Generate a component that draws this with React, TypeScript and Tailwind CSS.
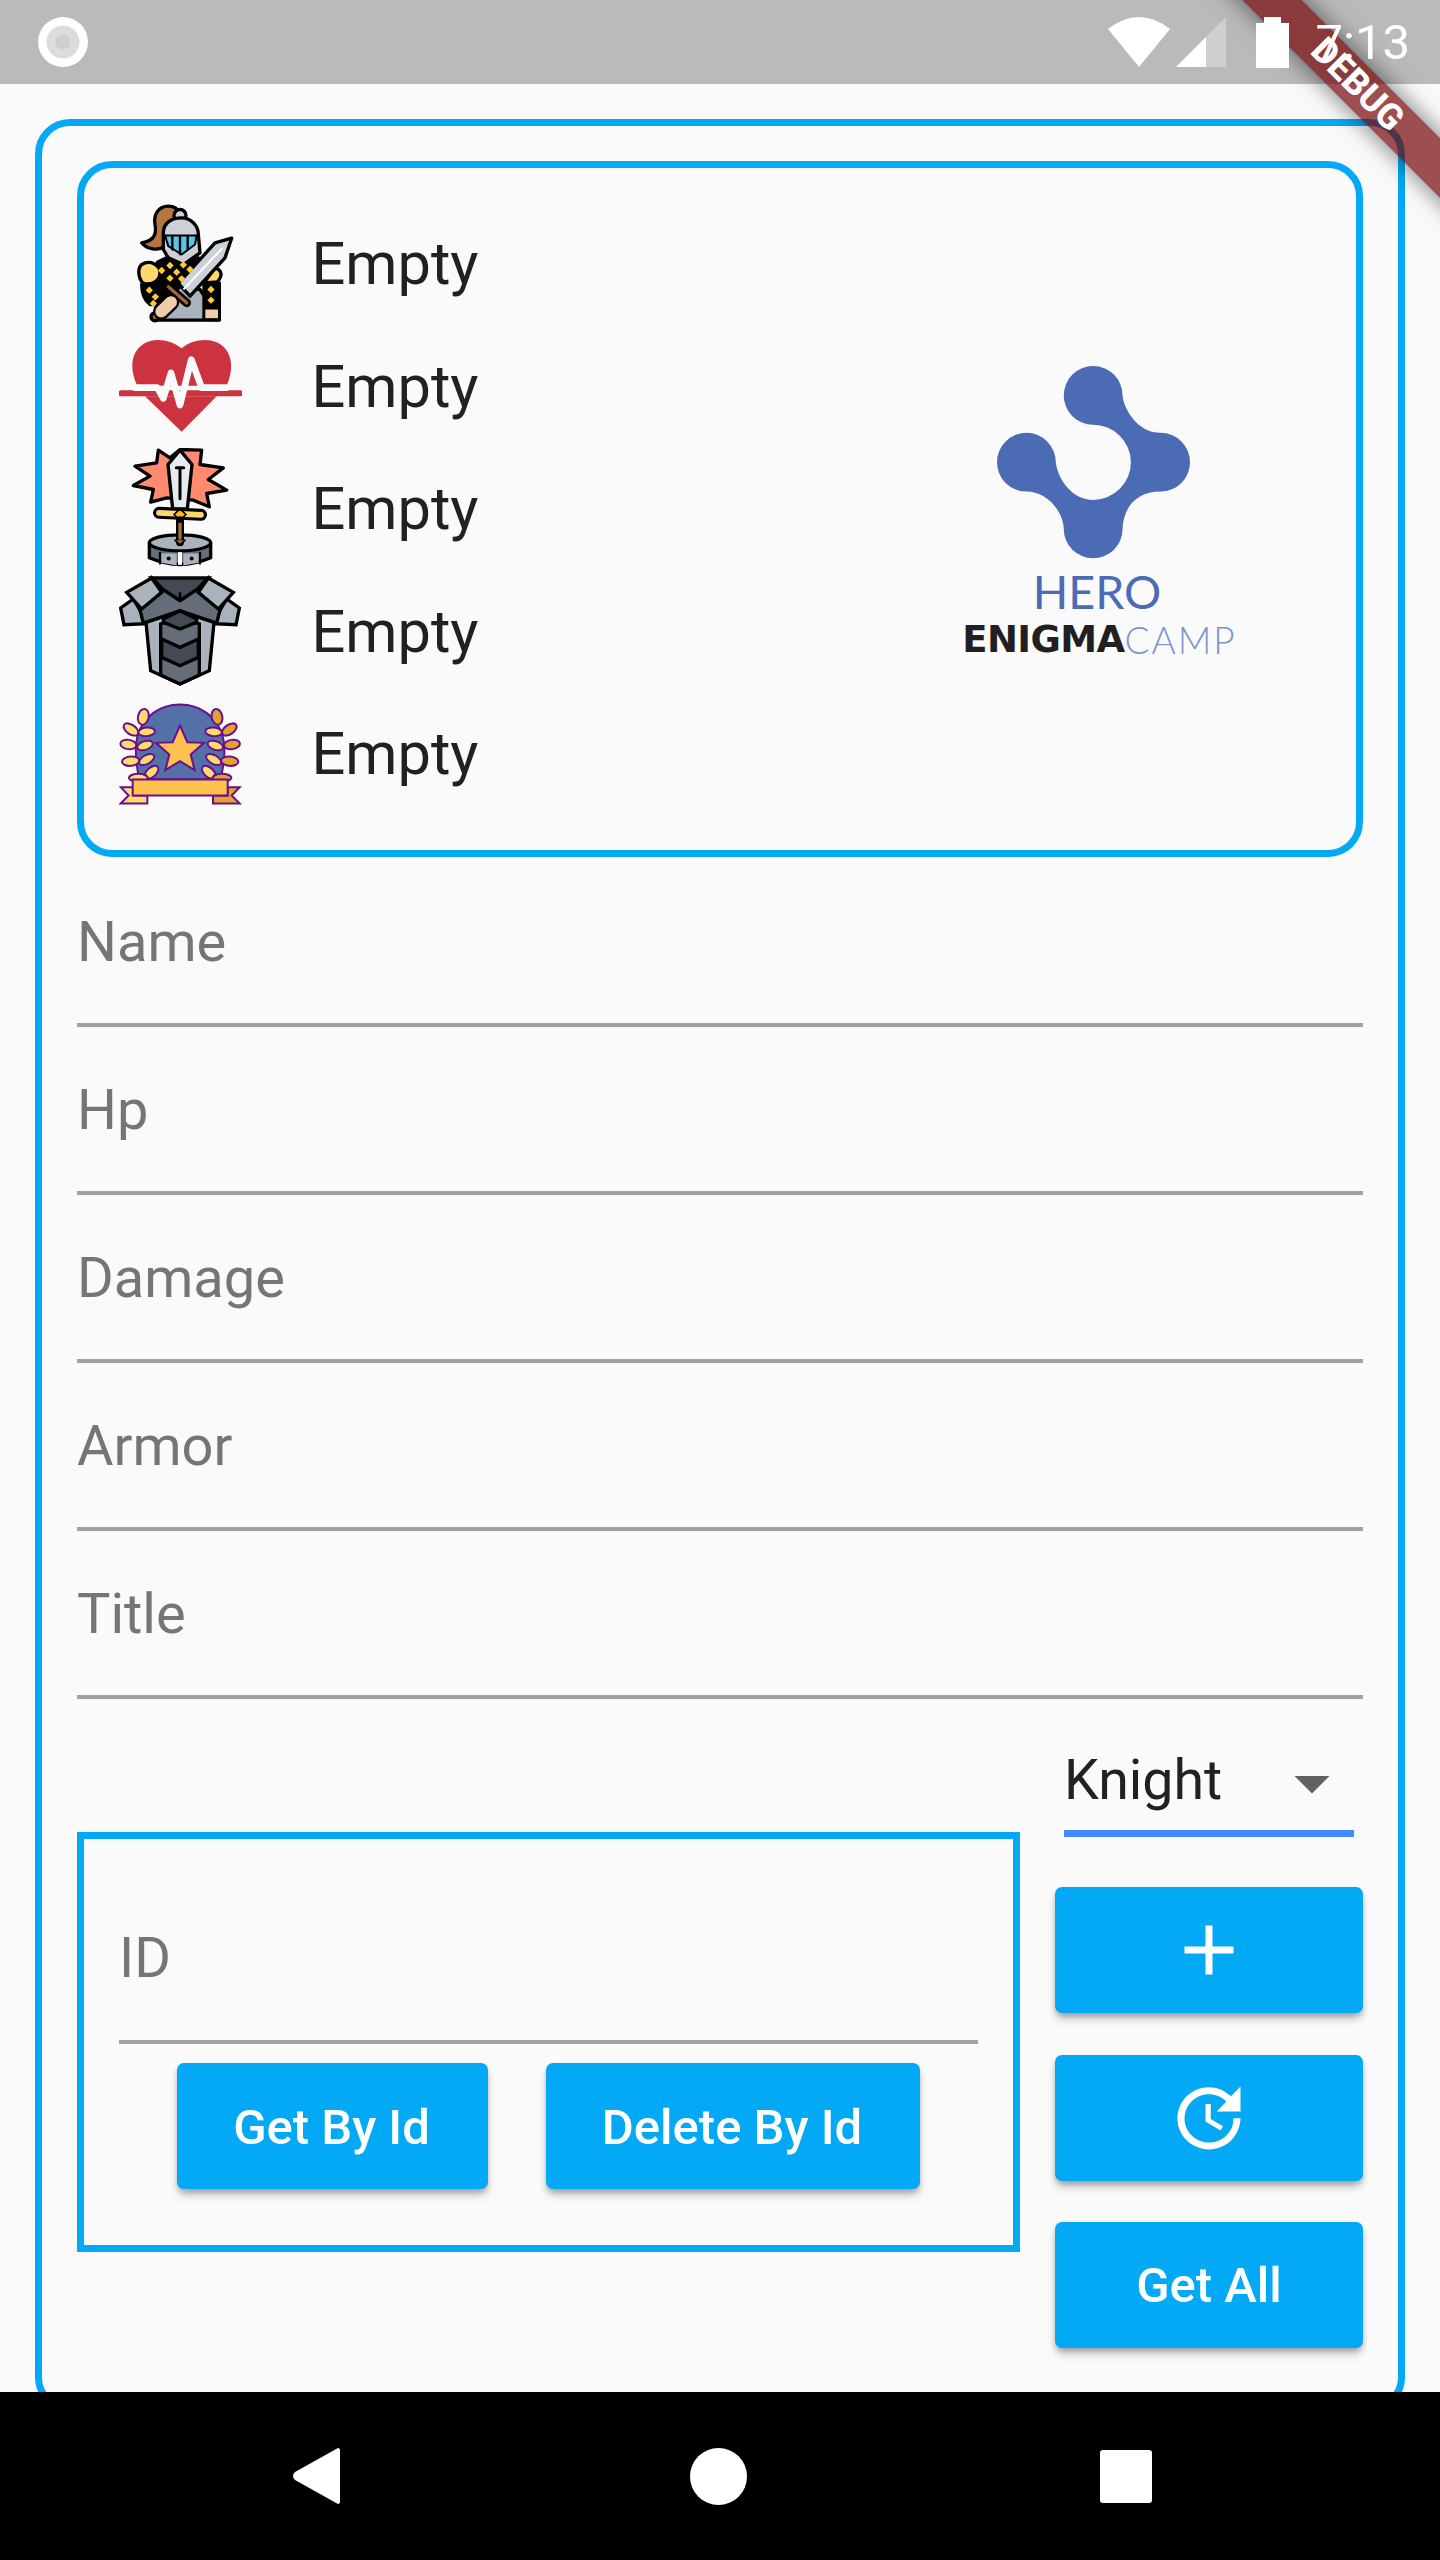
import React from "react";

const BLUE = "border-[#03a9f4]";

function Knight() {
  const diamonds = [[210,228],[250,226],[185,243],[230,248],[270,240],[210,266],[245,268],[148,302],[166,322],[160,342],[333,300],[333,332]];
  return (
    <svg viewBox="57 40.5 367.5 367.5" className="w-[122.5px] h-[122.5px] shrink-0">
      <g stroke="#000" strokeWidth="10" strokeLinejoin="round" strokeLinecap="round">
        <path d="M205 50C175 50 160 75 165 105C170 130 165 155 125 160C140 180 175 185 195 170L240 75C235 60 225 50 205 50Z" fill="#b5773f"/>
        <circle cx="240" cy="78" r="18" fill="#ccd1d9"/>
        <path d="M175 280L300 300L358 392L165 392Z" fill="#aab2bd"/>
        <path d="M172 218L200 205L250 232L295 205L310 228L225 305L180 275Z" fill="#000"/>
        <path d="M125 225C150 210 180 225 180 250C180 270 165 282 140 285C115 280 110 240 125 225Z" fill="#ffd76b"/>
        <path d="M345 235C362 240 372 255 352 277L312 280Z" fill="#ffd76b"/>
        <path d="M125 285L180 280L205 312L170 345L150 345C130 330 125 310 125 285Z" fill="#000"/>
        <rect x="312" y="280" width="46" height="110" fill="#000"/>
        <rect x="316" y="360" width="38" height="26" fill="#f0cfa8" stroke="none"/>
        <path d="M190 130C190 100 215 85 245 85C275 85 295 110 295 135L300 190L250 225L205 205L190 180Z" fill="#ccd1d9"/>
        <path d="M195 138L290 138L285 165L245 195L205 170Z" fill="#5bc4e8" strokeWidth="6"/>
        <path d="M217 140V180M240 140V194M263 140V178" strokeWidth="7"/>
        <path d="M395 146L345 160L235 282L270 320L375 205Z" fill="#ccd1d9"/>
        <path d="M252 298L365 178" stroke="#fff" strokeWidth="6"/>
        <path d="M205 292L260 340" strokeWidth="26"/>
        <path d="M205 292L260 340" stroke="#a0683a" strokeWidth="10"/>
        <circle cx="165" cy="382" r="12" fill="#a0683a"/>
        <path d="M213 338L184 366" strokeWidth="50"/>
        <path d="M213 338L184 366" stroke="#f0cfa8" strokeWidth="36"/>
      </g>
      {diamonds.map(([x,y]) => (
        <path key={`${x}-${y}`} d={`M${x} ${y-11}L${x+11} ${y}L${x} ${y+11}L${x-11} ${y}Z`} fill="#ffc933"/>
      ))}
    </svg>
  );
}

function Heart() {
  return (
    <svg viewBox="57 408 367.5 367.5" className="w-[122.5px] h-[122.5px] shrink-0">
      <path d="M245 478C210 450 160 445 130 465C92 490 88 540 112 590L380 590C402 540 398 490 360 465C330 445 275 450 245 478Z" fill="#cc333f"/>
      <path d="M135 622L350 622L245 728Z" fill="#cc333f"/>
      <path d="M64 613H420" stroke="#cc333f" strokeWidth="18" strokeLinecap="round"/>
      <path d="M100 596H172L190 628L213 552L240 648L274 512L305 596H385" fill="none" stroke="#fafafa" strokeWidth="20" strokeLinejoin="round"/>
    </svg>
  );
}

function SwordIcon() {
  return (
    <svg viewBox="57 55.5 367.5 367.5" className="w-[122.5px] h-[122.5px] shrink-0">
      <g stroke="#000" strokeWidth="10" strokeLinejoin="round" strokeLinecap="round">
        <path d="M175 62L210 85L240 60L305 62L300 105L370 115L325 150L380 182L320 192L328 232L280 212L200 205L152 218L160 180L100 168L150 140L105 110L170 100Z" fill="#ff8a70"/>
        <path d="M240 62L276 105L262 238L218 238L204 105Z" fill="#e6e9ed"/>
        <path d="M229 115H251M240 115V208" strokeWidth="9"/>
        <path d="M177 250L303 256" strokeWidth="36"/>
        <path d="M177 250L303 256" stroke="#ffd76b" strokeWidth="17"/>
        <path d="M240 238L258 255L240 272L222 255Z" fill="#ffc107" strokeWidth="5"/>
        <path d="M148 340V385Q240 425 332 385V340Z" fill="#656d78"/>
        <ellipse cx="240" cy="340" rx="92" ry="24" fill="#aab2bd"/>
        <path d="M240 272V338" strokeWidth="24"/>
        <path d="M240 280V330" stroke="#a96e3c" strokeWidth="10" strokeLinecap="butt"/>
        <path d="M225 332L240 346L255 332" fill="#a96e3c" strokeWidth="5"/>
        <path d="M180 370V402M300 370V402" strokeWidth="7"/>
      </g>
      <path d="M184 372L230 372V408L184 400ZM250 372H296V400L250 408Z" fill="#aab2bd"/>
      <rect x="234" y="368" width="12" height="38" fill="#fff"/>
      <circle cx="206" cy="387" r="6" fill="#000"/>
      <circle cx="275" cy="387" r="6" fill="#000"/>
    </svg>
  );
}

function Armor() {
  return (
    <svg viewBox="57 423 367.5 367.5" className="w-[122.5px] h-[122.5px] shrink-0">
      <g stroke="#000" strokeWidth="10" strokeLinejoin="miter">
        <path d="M155 447H325L290 485L240 515L190 485Z" fill="#434a54"/>
        <path d="M62 537L100 510L135 570L138 584L72 587Z" fill="#aab2bd"/>
        <path d="M418 537L380 510L345 570L342 584L408 587Z" fill="#aab2bd"/>
        <path d="M138 580L152 725L240 765L328 725L342 580L240 545Z" fill="#aab2bd"/>
        <path d="M182 585L240 565L298 585V738L240 765L182 738Z" fill="#656d78"/>
        <path d="M185 630L240 655L295 630V685L240 710L185 685Z" fill="#434a54"/>
        <path d="M155 447L190 482L240 515L290 482L325 447L362 535L350 582L240 545L130 582L118 535Z" fill="#656d78"/>
        <path d="M240 490V515" strokeWidth="8"/>
        <path d="M190 570L240 545L290 570V580L240 600L190 580Z" fill="#434a54"/>
        <path d="M80 490L155 447L185 490L125 540Z" fill="#aab2bd"/>
        <path d="M400 490L325 447L295 490L355 540Z" fill="#aab2bd"/>
      </g>
    </svg>
  );
}

const leaves: [number, number, number, number, number][] = [
  [130,862,16,24,12],[93,900,25,14,35],[140,907,25,13,-5],[85,945,24,14,8],[135,948,24,13,-18],[92,995,26,14,-5],[140,990,25,13,-30],[155,1028,24,14,-42],[115,1045,28,12,0],
];

function Medal() {
  return (
    <svg viewBox="57 790.5 367.5 367.5" className="w-[122.5px] h-[122.5px] shrink-0">
      <g stroke="#6a0f8e" strokeWidth="6" strokeLinejoin="miter">
        <path d="M118 1050C105 990 105 950 112 920C130 860 180 825 240 825C300 825 350 860 368 920C377 950 375 990 362 1050Z" fill="#5470a8"/>
        <path d="M240 888L262 938L312 940L272 975L284 1022L240 995L196 1022L208 975L168 940L218 938Z" fill="#ffc14d"/>
        {leaves.map(([x,y,rx,ry,r],i) => (
          <ellipse key={i} cx={x} cy={y} rx={rx} ry={ry} transform={`rotate(${r} ${x} ${y})`} fill="#ffdc6b"/>
        ))}
        {leaves.map(([x,y,rx,ry,r],i) => (
          <ellipse key={i} cx={481-x} cy={y} rx={rx} ry={ry} transform={`rotate(${-r} ${481-x} ${y})`} fill={i===0||i===1||i===3||i===5||i===8?"#e0a32e":"#ffdc6b"}/>
        ))}
        <path d="M62 1073H100V1098H142V1122H62L86 1098Z" fill="#ffdc6b"/>
        <path d="M419 1073H383V1098H339V1122H419L395 1098Z" fill="#e0a32e"/>
        <rect x="98" y="1050" width="285" height="48" fill="#ffc14d"/>
      </g>
    </svg>
  );
}

function Field({ label, className = "" }: { label: string; className?: string }) {
  return (
    <div className={`flex items-center h-[168px] border-b-4 border-[#a1a1a1] text-[56px] text-[#757575] ${className}`}>
      {label}
    </div>
  );
}

function Btn({ className, children }: { className: string; children: React.ReactNode }) {
  return (
    <div className={`flex items-center justify-center h-[126px] rounded-[7px] bg-[#03a9f4] text-white text-[49px] font-medium shadow-[0_7px_10px_-2px_rgba(0,0,0,0.28),0_3px_5px_rgba(0,0,0,0.14)] ${className}`}>
      {children}
    </div>
  );
}

const rows = [Knight, Heart, SwordIcon, Armor, Medal];

export default function App() {
  return (
    <div className="relative flex flex-col w-[1440px] h-[2560px] overflow-hidden bg-[#fafafa] font-['Roboto',sans-serif]">
      <div className="flex items-center h-[84px] shrink-0 bg-[#bababa] pl-[38px]">
        <svg width="50" height="50" viewBox="0 0 50 50" className="relative z-20 shrink-0">
          <circle cx="25" cy="25" r="25" fill="#fff"/>
          <circle cx="25" cy="25" r="16.5" fill="#dcdcdc"/>
          <circle cx="25" cy="25" r="7.5" fill="#cfcfcf"/>
        </svg>
        <div className="relative z-20 flex items-center ml-auto pr-[30px]">
          <svg width="62" height="50" viewBox="0 0 62 50" className="mr-[6px]">
            <path d="M0 12Q31 -12 62 12L31 50Z" fill="#fff"/>
          </svg>
          <svg width="50" height="50" viewBox="0 0 50 50" className="mr-[30px]">
            <path d="M0 50L50 0V50Z" fill="#fff" fillOpacity="0.3"/>
            <path d="M0 50L30 20V50Z" fill="#fff"/>
          </svg>
          <svg width="33" height="51" viewBox="0 0 33 51" className="mr-[27px]">
            <path d="M8 0H25V6H33V51H0V6H8Z" fill="#fff"/>
          </svg>
          <span className="text-[49px] leading-none text-white">7:13</span>
        </div>
      </div>

      <div className="flex-1 min-h-0 overflow-hidden p-[35px] pb-0">
        <div className={`border-[7px] ${BLUE} rounded-[35px] px-[35px] pt-[35px] h-[2293px]`}>
          <div className={`flex items-center border-[7px] ${BLUE} rounded-[35px] h-[696px] px-[35px]`}>
            <div className="flex flex-col">
              {rows.map((Icon, i) => (
                <div key={i} className="flex items-center h-[122.5px]">
                  <Icon />
                  <span className="ml-[70px] pt-[2px] text-[59.5px] text-[#212121]">Empty</span>
                </div>
              ))}
            </div>
            <div className="flex flex-col items-center ml-auto mr-[58px] w-[340px]">
              <svg width="193" height="193" viewBox="202 77 578 578">
                <path d="M490 77A88 88 0 0 1 578 165C580 200 620 277 692 277A88 88 0 0 1 692 453C620 453 580 500 578 565A88 88 0 0 1 402 565C400 510 350 453 290 453A88 88 0 0 1 290 277A88 88 0 0 1 378 365C385 420 430 478 490 478A113 113 0 0 0 603 365A113 113 0 0 0 490 253A88 88 0 0 1 402 165A88 88 0 0 1 490 77Z" fill="#4b6bb5"/>
              </svg>
              <div className="mt-[15px] ml-[8px] h-[35px] leading-[35px] text-[46.5px] text-[#4b6bb5] font-['Lato',sans-serif]">HERO</div>
              <div className="flex mt-[17px] ml-[13px] h-[27px] leading-[27px] text-[37px]">
                <span className="font-['DejaVu_Sans',sans-serif] font-bold tracking-[-0.6px] text-[#231f20]">ENIGMA</span>
                <span className="font-['Lato',sans-serif] font-light tracking-[2px] text-[#7a96cf]">CAMP</span>
              </div>
            </div>
          </div>

          <div className="pt-[2px]">
            {["Name", "Hp", "Damage", "Armor", "Title"].map((l) => (
              <Field key={l} label={l} className="pt-[2px]" />
            ))}
          </div>

          <div className="flex items-start justify-between">
            <div className={`mt-[133px] w-[943px] h-[420px] border-[7px] ${BLUE} px-[35px] pt-[37px]`}>
              <Field label="ID" />
              <div className="flex justify-center gap-[58px] mt-[19px]">
                <Btn className="w-[311px] pt-[3px] pr-[2px]">Get By Id</Btn>
                <Btn className="w-[374px] pt-[3px] pr-[2px]">Delete By Id</Btn>
              </div>
            </div>

            <div className="flex flex-col w-[308px]">
              <div className="flex items-center justify-between h-[107px] mt-[31px] mx-[9px] border-b-[7px] border-[#448aff]">
                <span className="pt-[2px] text-[55.5px] text-[#212121]">Knight</span>
                <svg width="84" height="84" viewBox="0 0 24 24" className="-mb-[6px]">
                  <path d="M7 10l5 5 5-5z" fill="#616161"/>
                </svg>
              </div>
              <div className="flex flex-col gap-[41.5px] mt-[50px]">
                <Btn className="w-full">
                  <svg width="84" height="84" viewBox="0 0 24 24">
                    <path d="M19 13h-6v6h-2v-6H5v-2h6V5h2v6h6v2z" fill="#fff"/>
                  </svg>
                </Btn>
                <Btn className="w-full">
                  <svg width="84" height="84" viewBox="0 0 24 24">
                    <path d="M21 10.12h-6.78l2.74-2.82c-2.73-2.7-7.15-2.8-9.88-.1-2.73 2.71-2.73 7.08 0 9.79s7.15 2.71 9.88 0C18.32 15.65 19 14.08 19 12.1h2c0 1.98-.88 4.55-2.64 6.29-3.51 3.48-9.21 3.48-12.72 0-3.5-3.47-3.53-9.11-.02-12.58s9.14-3.47 12.65 0L21 3v7.12zM12.5 8v4.25l3.5 2.08-.72 1.21L11 13V8h1.5z" fill="#fff"/>
                  </svg>
                </Btn>
                <Btn className="w-full pt-[2px]">Get All</Btn>
              </div>
            </div>
          </div>
        </div>
      </div>

      <div className="relative z-20 flex items-center h-[168px] shrink-0 bg-black pl-[292px]">
        <svg width="48" height="56" viewBox="0 0 48 56">
          <path d="M46 0Q48 0 48 3V53Q48 56 46 56L3 32Q-1 28 3 24Z" fill="#fff"/>
        </svg>
        <div className="ml-[350px] w-[57px] h-[57px] rounded-full bg-white"/>
        <div className="ml-[353px] w-[52px] h-[53px] rounded-[3px] bg-white"/>
      </div>

      <div className="absolute z-10 left-[1157px] top-[64px] flex items-center justify-center w-[400px] h-[42px] rotate-45 bg-[rgba(116,0,0,0.69)] shadow-[0_0_24px_rgba(0,0,0,0.55)]">
        <span className="text-[35.7px] leading-none font-extrabold text-white">DEBUG</span>
      </div>
    </div>
  );
}
